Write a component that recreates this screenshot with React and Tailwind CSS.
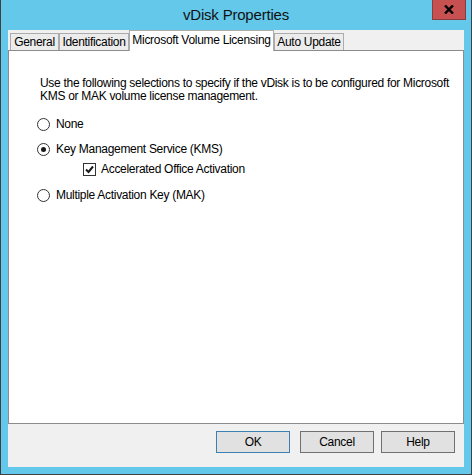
import React from "react";

const font = { fontFamily: '"Liberation Sans", Arial, sans-serif' };

function Radio({ checked }) {
  return (
    <span className="flex h-[13px] w-[13px] shrink-0 items-center justify-center rounded-full border border-[#333333] bg-white">
      {checked && <span className="h-[5px] w-[5px] rounded-full bg-[#1a1a1a]" />}
    </span>
  );
}

function Checkbox() {
  return (
    <span className="flex h-[13px] w-[13px] shrink-0 items-center justify-center border border-[#333333] bg-white">
      <svg width="9" height="9" viewBox="0 0 9 9">
        <path d="M1 4.5 L3.5 7 L8 1.5" fill="none" stroke="#1a1a1a" strokeWidth="2" />
      </svg>
    </span>
  );
}

function Tab({ label, w, selected }) {
  if (selected) {
    return (
      <div
        className={`relative z-10 -mb-px flex h-[21px] items-center justify-center whitespace-nowrap border border-b-0 border-[#acacac] bg-white ${w}`}
      >
        <span className="-mt-[2px]">{label}</span>
      </div>
    );
  }
  return (
    <div
      className={`flex h-[17px] items-center justify-center whitespace-nowrap border border-b-0 border-[#acacac] bg-[#ececec] ${w}`}
    >
      {label}
    </div>
  );
}

function Button({ label, primary, cls }) {
  return (
    <div
      className={`flex h-[22px] w-[74px] items-center justify-center border bg-[#e1e1e1] text-black ${
        primary ? "border-[#3c7fb1]" : "border-[#707070]"
      } ${cls}`}
    >
      {label}
    </div>
  );
}

export default function App() {
  return (
    <div
      style={font}
      className="flex h-[475px] w-[472px] flex-col border-x border-b border-[#404040] bg-[#63c8ea] text-black"
    >
      {/* Title bar */}
      <div className="grid h-[30px] grid-cols-[1fr_auto_1fr] items-start">
        <div />
        <div className="pt-[5px] text-[15px] leading-[20px] tracking-[-0.2px] text-[#111]">vDisk Properties</div>
        <div className="flex justify-end pr-[5px]">
          <div className="flex h-[20px] w-[34px] items-center justify-center border border-t-0 border-[#8a3b3b] bg-[#c75050]">
            <svg width="10" height="9" viewBox="0 0 10 9">
              <path d="M1 0.5 L9 8.5 M9 0.5 L1 8.5" stroke="#000" strokeWidth="2.4" />
            </svg>
          </div>
        </div>
      </div>

      {/* Client area */}
      <div className="ml-[7px] flex h-[437px] w-[456px] flex-col bg-[#f0f0f0] text-[12px] tracking-[-0.3px]">
        {/* Tabs */}
        <div className="flex h-[20px] items-end pl-[2px] leading-[14px]">
          <Tab label="General" w="w-[49px]" />
          <Tab label="Identification" w="w-[70px]" />
          <Tab label="Microsoft Volume Licensing" w="w-[145px]" selected />
          <Tab label="Auto Update" w="w-[70px]" />
        </div>

        {/* Panel */}
        <div className="flex h-[374px] flex-col border border-[#8c8c8c] bg-white pl-[28px] pt-[26px] leading-[13px]">
          <p className="whitespace-nowrap pl-[3px]">
            Use the following selections to specify if the vDisk is to be configured for Microsoft
            <br />
            KMS or MAK volume license management.
          </p>
          <div className="mt-[15px] flex h-[13px] items-center gap-[6px]">
            <Radio />
            <span>None</span>
          </div>
          <div className="mt-[12px] flex h-[13px] items-center gap-[6px]">
            <Radio checked />
            <span>Key Management Service (KMS)</span>
          </div>
          <div className="ml-[46px] mt-[7px] flex h-[13px] items-center gap-[5px]">
            <Checkbox />
            <span>Accelerated Office Activation</span>
          </div>
          <div className="mt-[13px] flex h-[13px] items-center gap-[6px]">
            <Radio />
            <span>Multiple Activation Key (MAK)</span>
          </div>
        </div>

        {/* Buttons */}
        <div className="mt-[7px] flex justify-end pr-[9px]">
          <Button label="OK" primary />
          <Button label="Cancel" cls="ml-[10px]" />
          <Button label="Help" cls="ml-[7px]" />
        </div>
      </div>
    </div>
  );
}
